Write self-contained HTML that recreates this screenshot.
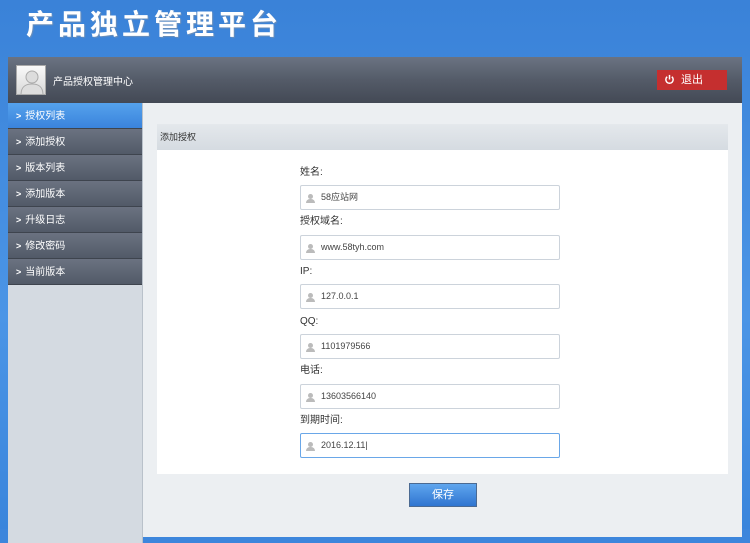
<!DOCTYPE html>
<html><head><meta charset="utf-8"><style>
*{margin:0;padding:0;box-sizing:border-box}
body{width:750px;height:529px;overflow:hidden;background:#3d86dc;font-family:"Liberation Sans","Noto Sans CJK SC",sans-serif;position:relative;font-size:10px;color:#333}
.bg{position:absolute;inset:0;background:linear-gradient(#3a82d8,#4b95e6 60%,#3a85dc);}
.title{position:absolute;left:26px;top:7px;font-size:28px;line-height:36px;color:#fff;letter-spacing:4px;font-weight:bold;text-shadow:1px 1px 1px #6c8fb8}
.panel{position:absolute;left:8px;top:57px;width:734px;height:480px;background:#eceff2}
.hd{position:absolute;left:0;top:0;width:734px;height:46px;background:linear-gradient(#6b7382,#545b68 50%,#434955)}
.av{position:absolute;left:8px;top:8px;width:30px;height:30px;background:linear-gradient(#fafafa,#d8d8d8);border:1px solid #aaa;overflow:hidden}
.hd .t{position:absolute;left:45px;top:16px;color:#fff;font-size:10px}
.out{position:absolute;left:649px;top:13px;width:70px;height:20px;background:#c52f2f;color:#fff;font-size:11px;line-height:20px;padding-left:24px}
.out svg{position:absolute;left:7px;top:4px}
.side{position:absolute;left:0;top:46px;width:135px;height:440px;background:#d4dae1;border-right:1px solid #b9c1ca}
.it{height:26px;line-height:26px;color:#fff;font-size:10px;padding-left:8px;background:linear-gradient(#6b7281,#525a68);border-bottom:1px solid #3e444e}
.it.a{background:linear-gradient(#55a2ec,#3a83dc)}
.it b{font-size:9px;margin-right:4px}
.box{position:absolute;left:149px;top:67px;width:571px;height:350px;background:#fff}
.bt{height:26px;background:linear-gradient(#e4e8ec,#d5dbe1);line-height:26px;padding-left:3px;font-size:9px;color:#333}
.lb{position:absolute;left:143px;font-size:10px;line-height:12px;color:#333}
.in{position:absolute;left:143px;width:260px;height:25px;border:1px solid #ccd3db;border-radius:2px;font-size:9px;line-height:23px;padding-left:20px;color:#444}
.in::before{content:"";position:absolute;left:7px;top:8px;width:5px;height:5px;border-radius:50%;background:#bbb}
.in::after{content:"";position:absolute;left:5px;top:13px;width:9px;height:4px;border-radius:4px 4px 0 0;background:#bbb}
.in.f{border:1px solid #6aa7e8}
.btn{position:absolute;left:401px;top:426px;width:68px;height:24px;background:linear-gradient(#5fa6ee,#2f74d0);border:1px solid #4b6a92;color:#fff;font-size:11px;text-align:center;line-height:22px}
</style></head><body>
<div class="bg"></div>
<div class="title">产品独立管理平台</div>
<div class="panel">
<div class="hd"><div class="av"><svg width="30" height="30" viewBox="0 0 30 30"><circle cx="15" cy="11" r="6" fill="#ddd" stroke="#aaa"/><path d="M4 29C4 20 9 18 15 18S26 20 26 29Z" fill="#ddd" stroke="#aaa"/></svg></div><div class="t">产品授权管理中心</div>
<div class="out"><svg width="11" height="11" viewBox="0 0 12 12"><path d="M3.5 3A4 4 0 1 0 8.5 3" fill="none" stroke="#fff" stroke-width="1.6"/><path d="M6 1V6" stroke="#fff" stroke-width="1.6"/></svg>退出</div></div>
<div class="side">
<div class="it a"><b>&gt;</b>授权列表</div>
<div class="it"><b>&gt;</b>添加授权</div>
<div class="it"><b>&gt;</b>版本列表</div>
<div class="it"><b>&gt;</b>添加版本</div>
<div class="it"><b>&gt;</b>升级日志</div>
<div class="it"><b>&gt;</b>修改密码</div>
<div class="it"><b>&gt;</b>当前版本</div>
</div>
<div class="box"><div class="bt">添加授权</div>
<div class="lb" style="top:43px">姓名:</div>
<div class="in" style="top:61px">58应站网</div>
<div class="lb" style="top:92px">授权域名:</div>
<div class="in" style="top:111px">www.58tyh.com</div>
<div class="lb" style="top:142px">IP:</div>
<div class="in" style="top:160px">127.0.0.1</div>
<div class="lb" style="top:192px">QQ:</div>
<div class="in" style="top:210px">1101979566</div>
<div class="lb" style="top:241px">电话:</div>
<div class="in" style="top:260px">13603566140</div>
<div class="lb" style="top:291px">到期时间:</div>
<div class="in f" style="top:309px">2016.12.11|</div>
</div>
<div class="btn">保存</div>
</div>
</body></html>
